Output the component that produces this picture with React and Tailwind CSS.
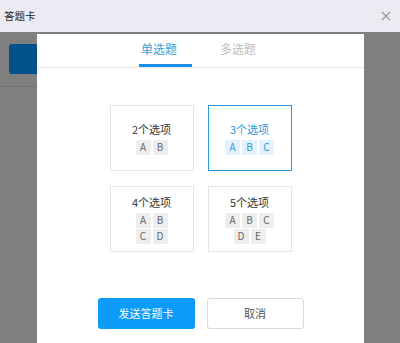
import React from "react"

const FONT = { fontFamily: '"Noto Sans CJK SC", "Noto Sans", sans-serif' }

const cards = [
    { label: "2个选项", rows: [["A", "B"]], active: false },
    { label: "3个选项", rows: [["A", "B", "C"]], active: true },
    { label: "4个选项", rows: [["A", "B"], ["C", "D"]], active: false },
    { label: "5个选项", rows: [["A", "B", "C"], ["D", "E"]], active: false },
]

function OptionCard({ label, rows, active }) {
    return (
        <div
            className={`w-[84px] h-[66px] flex flex-col items-center justify-center border ${
                active ? "border-[#2f93d8]" : "border-[#e4e4e4]"
            }`}
        >
            <div className={`text-[11px] leading-[14px] ${active ? "text-[#2a98d8]" : "text-[#333]"}`}>
                {label}
            </div>
            <div className="mt-[4px] flex flex-col items-center gap-[1px]">
                {rows.map((row, i) => (
                    <div key={i} className="flex gap-[2px]">
                        {row.map((l) => (
                            <div
                                key={l}
                                className={`w-[15px] h-[15px] flex items-center justify-center text-[10px] leading-none ${
                                    active ? "bg-[#e3f2fc] text-[#2a98d8]" : "bg-[#eeeeee] text-[#666]"
                                }`}
                            >
                                {l}
                            </div>
                        ))}
                    </div>
                ))}
            </div>
        </div>
    )
}

export default function App() {
    return (
        <div className="w-[400px] h-[343px] overflow-hidden flex flex-col" style={FONT}>
            <div className="h-[32px] bg-[#ecebf3] flex items-center justify-between pl-[4px] pr-[9px]">
                <span className="text-[10.5px] text-[#222]">答题卡</span>
                <svg width="10" height="10" viewBox="0 0 10 10">
                    <path d="M1 1L9 9M9 1L1 9" stroke="#9a9a9a" strokeWidth="1.4" />
                </svg>
            </div>
            <div className="relative flex-1 bg-[#7f7f7f]">
                {/* page behind the dialog */}
                <div className="ml-[9px] mt-[12px] w-[40px] h-[30px] rounded-[3px] bg-[#01528a]"></div>
                <div className="mt-[12px] h-px w-[40px] bg-[#747474]"></div>

                <div className="absolute left-[37px] top-[2px] w-[327px] bottom-0 bg-white flex flex-col">
                    <div className="flex pl-[102px] gap-[26px] border-b border-[#e8e8e8]">
                        <div className="w-[53px] h-[33px] flex items-center pl-[2px] border-b-[3px] border-[#1a8fe8] text-[12px] text-[#3a9ed8]">
                            单选题
                        </div>
                        <div className="w-[53px] h-[33px] flex items-center pl-[2px] border-b-[3px] border-transparent text-[12px] text-[#bdbdbd]">
                            多选题
                        </div>
                    </div>

                    <div className="mt-[37px] mx-auto grid grid-cols-[84px_84px] gap-x-[14px] gap-y-[15px]">
                        {cards.map((c) => (
                            <OptionCard key={c.label} {...c} />
                        ))}
                    </div>

                    <div className="mt-[46px] flex justify-center gap-[12px]">
                        <button className="w-[97px] h-[31px] rounded-[3px] bg-[#0c9bf8] text-white text-[11px]">
                            发送答题卡
                        </button>
                        <button className="w-[97px] h-[31px] rounded-[3px] border border-[#d9d9d9] bg-white text-[#555] text-[11px]">
                            取消
                        </button>
                    </div>
                </div>
            </div>
        </div>
    )
}
